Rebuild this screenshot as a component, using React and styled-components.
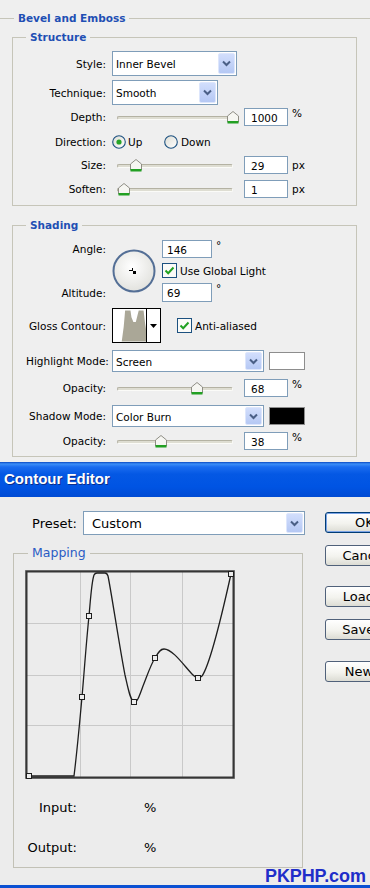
import React from 'react';
import styled, { createGlobalStyle } from 'styled-components';

const Global = createGlobalStyle`
  html, body { margin: 0; padding: 0; background: #eeeeee; }
  body { width: 370px; height: 888px; overflow: hidden; font-family: "DejaVu Sans", sans-serif; }
  #root { width: 370px; height: 888px; overflow: hidden; }
`;

const Page = styled.div`
  position: relative;
  width: 370px;
  height: 888px;
  overflow: hidden;
  background: #eeeeee;
  color: #000;
`;

const TopPanel = styled.div`
  height: 462px;
  box-sizing: border-box;
  padding-top: 11px;
  overflow: hidden;
  font-family: "DejaVu Sans", sans-serif;
  font-size: 10.5px;
  background: #efefef;
`;

const OuterGroup = styled.fieldset`
  margin: 0;
  padding: 0 13px 0 12px;
  border: none;
  border-top: 1px solid #c6c5b9;
  min-width: 0;
`;

const Legend = styled.legend`
  padding: 0 4px;
  margin-left: ${(p) => p.$ml || 0}px;
  font: bold 10.5px/14px "DejaVu Sans", sans-serif;
  color: #1f4fb4;
`;

const Group = styled.fieldset`
  margin: ${(p) => p.$mt}px 0 0 0;
  padding: ${(p) => p.$pt}px 8px ${(p) => p.$pb}px 13px;
  border: 1px solid #c6c5b9;
  min-width: 0;
`;

const Row = styled.div`
  display: grid;
  grid-template-columns: 80px auto;
  column-gap: 6px;
  align-items: center;
  height: ${(p) => p.$h}px;
  margin-top: ${(p) => p.$mt || 0}px;
`;

const Label = styled.span`
  text-align: right;
  white-space: nowrap;
`;

const Controls = styled.div`
  display: flex;
  align-items: center;
  height: 100%;
`;

const Combo = styled.div`
  display: flex;
  align-items: center;
  justify-content: space-between;
  width: ${(p) => p.$w}px;
  height: ${(p) => p.$h}px;
  box-sizing: border-box;
  border: 1px solid #7f9db9;
  background: #fff;
  padding: 1px 1px 1px ${(p) => p.$pl || 3}px;
  font-size: ${(p) => p.$fs || 10.5}px;
  margin-left: ${(p) => p.$ml || 0}px;
`;

const ComboText = styled.span`
  padding-top: 1px;
  white-space: nowrap;
`;

const ComboBtn = styled.span`
  width: 17px;
  align-self: stretch;
  box-sizing: border-box;
  display: flex;
  align-items: center;
  justify-content: center;
  background: linear-gradient(#d2defc, #b5c8f4);
  border: 1px solid #dde6fc;
  border-radius: 2px;
`;

const Field = styled.div`
  width: ${(p) => p.$w || 44}px;
  height: ${(p) => p.$h || 18}px;
  box-sizing: border-box;
  border: 1px solid #7f9db9;
  background: #fff;
  padding: 1px 0 0 ${(p) => p.$pl || 6}px;
  display: flex;
  align-items: center;
  margin-left: ${(p) => p.$ml || 0}px;
`;

const Unit = styled.span`
  margin-left: 4px;
  align-self: ${(p) => (p.$top ? 'flex-start' : 'center')};
  line-height: ${(p) => (p.$top ? '10px' : 'normal')};
`;

const SliderBox = styled.div`
  position: relative;
  width: 128px;
  height: 18px;
  flex: none;
`;

const Track = styled.div`
  position: absolute;
  left: 5px;
  right: 7px;
  top: 8px;
  height: 2px;
  border: 1px solid #b4b2a3;
  border-bottom-color: #fbfbf8;
  border-right-color: #fbfbf8;
  border-radius: 2px;
  background: #deddd2;
`;

const ThumbIcon = styled.svg`
  position: absolute;
  top: 3px;
  margin-left: -6px;
`;

const RadioOption = styled.div`
  display: flex;
  align-items: center;
  width: ${(p) => p.$w || 'auto'};
`;

const OptText = styled.span`
  margin-left: ${(p) => p.$ml || 2}px;
  white-space: nowrap;
`;

const AngleGrid = styled.div`
  display: grid;
  grid-template-columns: 86px 50px auto;
  grid-template-rows: 18px 15px 19px;
  row-gap: 5px;
  align-items: center;
`;

const GridLabel = styled.span`
  text-align: right;
  padding-right: 6px;
  grid-column: 1;
  grid-row: ${(p) => p.$row};
`;

const GridCell = styled.div`
  grid-column: ${(p) => p.$col};
  grid-row: ${(p) => p.$row};
  display: flex;
  align-items: center;
  align-self: ${(p) => p.$self || 'center'};
`;

const Swatch = styled.div`
  width: 36px;
  height: 18px;
  box-sizing: border-box;
  margin-left: 5px;
  border: 1px solid #8d8d8d;
  background: ${(p) => p.$color};
`;

const CheckOption = styled.div`
  display: flex;
  align-items: center;
  margin-left: ${(p) => p.$ml || 0}px;
`;

const ContourThumb = styled.div`
  display: flex;
  width: 49px;
  height: 35px;
  box-sizing: border-box;
  border: 1px solid #000;
  background: #fff;
`;

const ContourArrow = styled.div`
  flex: none;
  width: 13px;
  border-left: 1px solid #000;
  display: flex;
  align-items: center;
  justify-content: center;
`;

/* Contour editor */
const TitleBar = styled.div`
  height: 35px;
  box-sizing: border-box;
  display: flex;
  align-items: center;
  padding: 0 0 2px 4px;
  background: linear-gradient(#0a49c2 0px, #3c8ef7 2px, #1b6cef 5px, #0458e4 12px, #0054e3 70%, #004bd4 100%);
  font: bold 15px "Liberation Sans", Arial, sans-serif;
  color: #fff;
  text-shadow: 1px 1px 0 #0b2d8a;
`;

const EditorBody = styled.div`
  display: flex;
  height: 388px;
  background: #ececec;
  font-family: "DejaVu Sans", sans-serif;
  font-size: 13px;
`;

const LeftCol = styled.div`
  width: 312px;
  flex: none;
`;

const RightCol = styled.div`
  margin-left: 13px;
  display: flex;
  flex-direction: column;
  flex: none;
`;

const PresetRow = styled.div`
  display: flex;
  align-items: center;
  margin-top: 14px;
  height: 24px;
`;

const PresetLabel = styled.span`
  width: 77px;
  text-align: right;
`;

const MappingGroup = styled.fieldset`
  margin: 10px 0 0 13px;
  width: 290px;
  box-sizing: border-box;
  padding: 9px 0 10px 11px;
  border: 1px solid #c2c1b6;
  min-width: 0;
`;

const MappingLegend = styled.legend`
  padding: 0 4px;
  margin-left: 3px;
  font: 12.5px/16px "DejaVu Sans", sans-serif;
  color: #2a5bc4;
`;

const ValueRow = styled.div`
  display: grid;
  grid-template-columns: 52px auto;
  align-items: center;
  height: 20px;
  margin-top: ${(p) => p.$mt}px;
`;

const ValueLabel = styled.span`
  text-align: right;
`;

const ValueUnit = styled.span`
  padding-left: 67px;
`;

const Btn = styled.div`
  width: 79px;
  height: 21px;
  box-sizing: border-box;
  margin-top: ${(p) => p.$mt}px;
  border: 1px solid ${(p) => (p.$def ? '#003c74' : '#50617a')};
  border-radius: 3px;
  background: linear-gradient(#ffffff, #f3f3ee 55%, #dcdcd4);
  box-shadow: ${(p) => (p.$def ? 'inset 0 0 0 1px #7aa3e6' : 'none')};
  display: flex;
  align-items: center;
  justify-content: center;
  font-size: 13px;
  white-space: nowrap;
`;

const BottomEdge = styled.div`
  height: 3px;
  background: #0b50d2;
`;

const Watermark = styled.div`
  position: absolute;
  left: 265px;
  top: 866px;
  font: bold 18px/20px "Liberation Sans", Arial, sans-serif;
  letter-spacing: -0.1px;
  color: #1f2ec9;
`;

/* icons */
const Chevron = () => (
  <svg width="9" height="7" viewBox="0 0 9 7">
    <path d="M1 1.5 L4.5 5 L8 1.5" stroke="#4a5f86" strokeWidth="2" fill="none" />
  </svg>
);

const Select = ({ w, h, text, fs, pl, ml }) => (
  <Combo $w={w} $h={h} $fs={fs} $pl={pl} $ml={ml}>
    <ComboText>{text}</ComboText>
    <ComboBtn>
      <Chevron />
    </ComboBtn>
  </Combo>
);

const Slider = ({ pct }) => (
  <SliderBox>
    <Track />
    <ThumbIcon width="12" height="13" viewBox="0 0 12 13" style={{ left: 5 + pct * 116 }}>
      <path d="M0.5 5 L6 0.5 L11.5 5 L11.5 11 L0.5 11 Z" fill="#f6f6f2" stroke="#8e8d84" />
      <rect x="0.5" y="10" width="11" height="2.5" fill="#22a023" />
    </ThumbIcon>
  </SliderBox>
);

const SliderRow = ({ label, pct, value, unit, mt }) => (
  <Row $h={18} $mt={mt}>
    <Label>{label}</Label>
    <Controls>
      <Slider pct={pct} />
      <Field $ml={4}>{value}</Field>
      <Unit $top={unit === '%'}>{unit}</Unit>
    </Controls>
  </Row>
);

const Radio = ({ on }) => (
  <svg width="14" height="14" viewBox="0 0 14 14">
    <defs>
      <linearGradient id="rg" x1="0" y1="0" x2="1" y2="1">
        <stop offset="0" stopColor="#dcdcd4" />
        <stop offset="1" stopColor="#ffffff" />
      </linearGradient>
    </defs>
    <circle cx="7" cy="7" r="6.3" fill="url(#rg)" stroke="#1c5180" strokeWidth="1.1" />
    {on && <circle cx="7" cy="7" r="2.6" fill="#27a527" />}
  </svg>
);

const Check = () => (
  <svg width="15" height="15" viewBox="0 0 15 15">
    <rect x="0.5" y="0.5" width="14" height="14" fill="#fbfbf8" stroke="#1c5180" />
    <path d="M3.5 7.5 L6.2 10.2 L11.5 4.5" stroke="#21a121" strokeWidth="2" fill="none" />
  </svg>
);

const AngleDial = () => (
  <svg width="44" height="44" viewBox="0 0 44 44">
    <defs>
      <radialGradient id="dialg" cx="45%" cy="40%" r="60%">
        <stop offset="0" stopColor="#ffffff" />
        <stop offset="1" stopColor="#e2e2de" />
      </radialGradient>
    </defs>
    <circle cx="22" cy="22" r="20.5" fill="url(#dialg)" stroke="#546f96" strokeWidth="2" />
    <path d="M17 21.5 H21 M20.5 19 V22" stroke="#000" strokeWidth="1" />
    <rect x="21" y="22" width="3" height="3" fill="#000" />
  </svg>
);

const GlossShape = () => (
  <svg width="34" height="33" viewBox="0 0 34 33">
    <path
      d="M9 33 L11 18 L12.5 1 L18 1 L19 8 L21 13 L23.5 13 L25 7 L26.5 1 L31.5 1 L33 14 L34 20 L34 33 Z"
      fill="#aaa797"
    />
  </svg>
);

const DownTriangle = () => (
  <svg width="7" height="4" viewBox="0 0 7 4">
    <path d="M0 0 H7 L3.5 4 Z" fill="#000" />
  </svg>
);

const ContourGraph = () => {
  const pts = [
    [4, 206],
    [57, 127],
    [64, 46],
    [109, 132],
    [130, 88],
    [173, 108],
    [206, 4],
  ];
  const d =
    'M4 206 H49 C51 190 54 160 57 127 C59 105 61 75 64 46 C65.5 30 66.5 12 69 5 Q70 3 72 3 H80 Q82 3 83 6 ' +
    'C86 20 95 80 100 105 C103 118 105 130 109 132 C112 134 115 124 118 116 C122 106 126 94 130 88 ' +
    'C133 83 135 79 139 79 C148 79 160 97 168 105 C171 108 174 109 177 106 C185 95 198 40 206 4';
  return (
    <svg width="210" height="209" viewBox="0 0 210 209" style={{ display: 'block' }}>
      <rect x="0.5" y="0.5" width="209" height="208" fill="#ececec" stroke="#9a9a9a" />
      <g stroke="#c9c9c9" strokeWidth="1">
        <line x1="55.5" y1="2" x2="55.5" y2="207" />
        <line x1="105.5" y1="2" x2="105.5" y2="207" />
        <line x1="157.5" y1="2" x2="157.5" y2="207" />
        <line x1="2" y1="53.5" x2="208" y2="53.5" />
        <line x1="2" y1="105.5" x2="208" y2="105.5" />
        <line x1="2" y1="155.5" x2="208" y2="155.5" />
      </g>
      <rect x="1.5" y="1.5" width="207" height="206" fill="none" stroke="#353535" strokeWidth="2" />
      <path d={d} stroke="#1e1e1e" strokeWidth="1.3" fill="none" />
      {pts.map(([x, y], i) => (
        <rect key={i} x={x - 2.5} y={y - 2.5} width="5" height="5" fill="#ececec" stroke="#1e1e1e" strokeWidth="1" />
      ))}
    </svg>
  );
};

export default function App() {
  return (
    <Page>
      <Global />
      <TopPanel>
        <OuterGroup>
          <Legend $ml={2}>Bevel and Emboss</Legend>

          <Group $mt={5} $pt={7} $pb={7}>
            <Legend>Structure</Legend>
            <Row $h={25}>
              <Label>Style:</Label>
              <Controls>
                <Select w={125} h={25} text="Inner Bevel" />
              </Controls>
            </Row>
            <Row $h={25} $mt={4}>
              <Label>Technique:</Label>
              <Controls>
                <Select w={106} h={25} text="Smooth" />
              </Controls>
            </Row>
            <SliderRow label="Depth:" pct={1} value="1000" unit="%" mt={3} />
            <Row $h={18} $mt={7}>
              <Label>Direction:</Label>
              <Controls>
                <RadioOption $w="52px">
                  <Radio on />
                  <OptText>Up</OptText>
                </RadioOption>
                <RadioOption>
                  <Radio />
                  <OptText $ml={3}>Down</OptText>
                </RadioOption>
              </Controls>
            </Row>
            <SliderRow label="Size:" pct={0.164} value="29" unit="px" mt={5} />
            <SliderRow label="Soften:" pct={0.06} value="1" unit="px" mt={6} />
          </Group>

          <Group $mt={12} $pt={8} $pb={6}>
            <Legend>Shading</Legend>
            <AngleGrid>
              <GridLabel $row={1}>Angle:</GridLabel>
              <GridLabel $row={3}>Altitude:</GridLabel>
              <GridCell $col={2} $row="1 / 4">
                <AngleDial />
              </GridCell>
              <GridCell $col={3} $row={1} $self="stretch">
                <Field $w={50} $pl={4}>146</Field>
                <Unit $top>°</Unit>
              </GridCell>
              <GridCell $col={3} $row={2}>
                <CheckOption>
                  <Check />
                  <OptText $ml={3}>Use Global Light</OptText>
                </CheckOption>
              </GridCell>
              <GridCell $col={3} $row={3} $self="stretch">
                <Field $w={50} $h={19} $pl={4}>69</Field>
                <Unit $top>°</Unit>
              </GridCell>
            </AngleGrid>

            <Row $h={35} $mt={6}>
              <Label>Gloss Contour:</Label>
              <Controls>
                <ContourThumb>
                  <GlossShape />
                  <ContourArrow>
                    <DownTriangle />
                  </ContourArrow>
                </ContourThumb>
                <CheckOption $ml={16}>
                  <Check />
                  <OptText $ml={3}>Anti-aliased</OptText>
                </CheckOption>
              </Controls>
            </Row>

            <Row $h={22} $mt={7}>
              <Label>Highlight Mode:</Label>
              <Controls>
                <Select w={152} h={22} text="Screen" />
                <Swatch $color="#ffffff" />
              </Controls>
            </Row>
            <SliderRow label="Opacity:" pct={0.69} value="68" unit="%" mt={7} />
            <Row $h={22} $mt={8}>
              <Label>Shadow Mode:</Label>
              <Controls>
                <Select w={152} h={22} text="Color Burn" />
                <Swatch $color="#000000" />
              </Controls>
            </Row>
            <SliderRow label="Opacity:" pct={0.38} value="38" unit="%" mt={5} />
          </Group>
        </OuterGroup>
      </TopPanel>

      <TitleBar>Contour Editor</TitleBar>
      <EditorBody>
        <LeftCol>
          <PresetRow>
            <PresetLabel>Preset:</PresetLabel>
            <Select w={222} h={24} text="Custom" fs={13} pl={8} ml={6} />
          </PresetRow>
          <MappingGroup>
            <MappingLegend>Mapping</MappingLegend>
            <ContourGraph />
            <ValueRow $mt={18}>
              <ValueLabel>Input:</ValueLabel>
              <ValueUnit>%</ValueUnit>
            </ValueRow>
            <ValueRow $mt={20}>
              <ValueLabel>Output:</ValueLabel>
              <ValueUnit>%</ValueUnit>
            </ValueRow>
          </MappingGroup>
        </LeftCol>
        <RightCol>
          <Btn $mt={15} $def>OK</Btn>
          <Btn $mt={12}>Cancel</Btn>
          <Btn $mt={20}>Load...</Btn>
          <Btn $mt={12}>Save...</Btn>
          <Btn $mt={21}>New...</Btn>
        </RightCol>
      </EditorBody>
      <BottomEdge />
      <Watermark>PKPHP.com</Watermark>
    </Page>
  );
}
